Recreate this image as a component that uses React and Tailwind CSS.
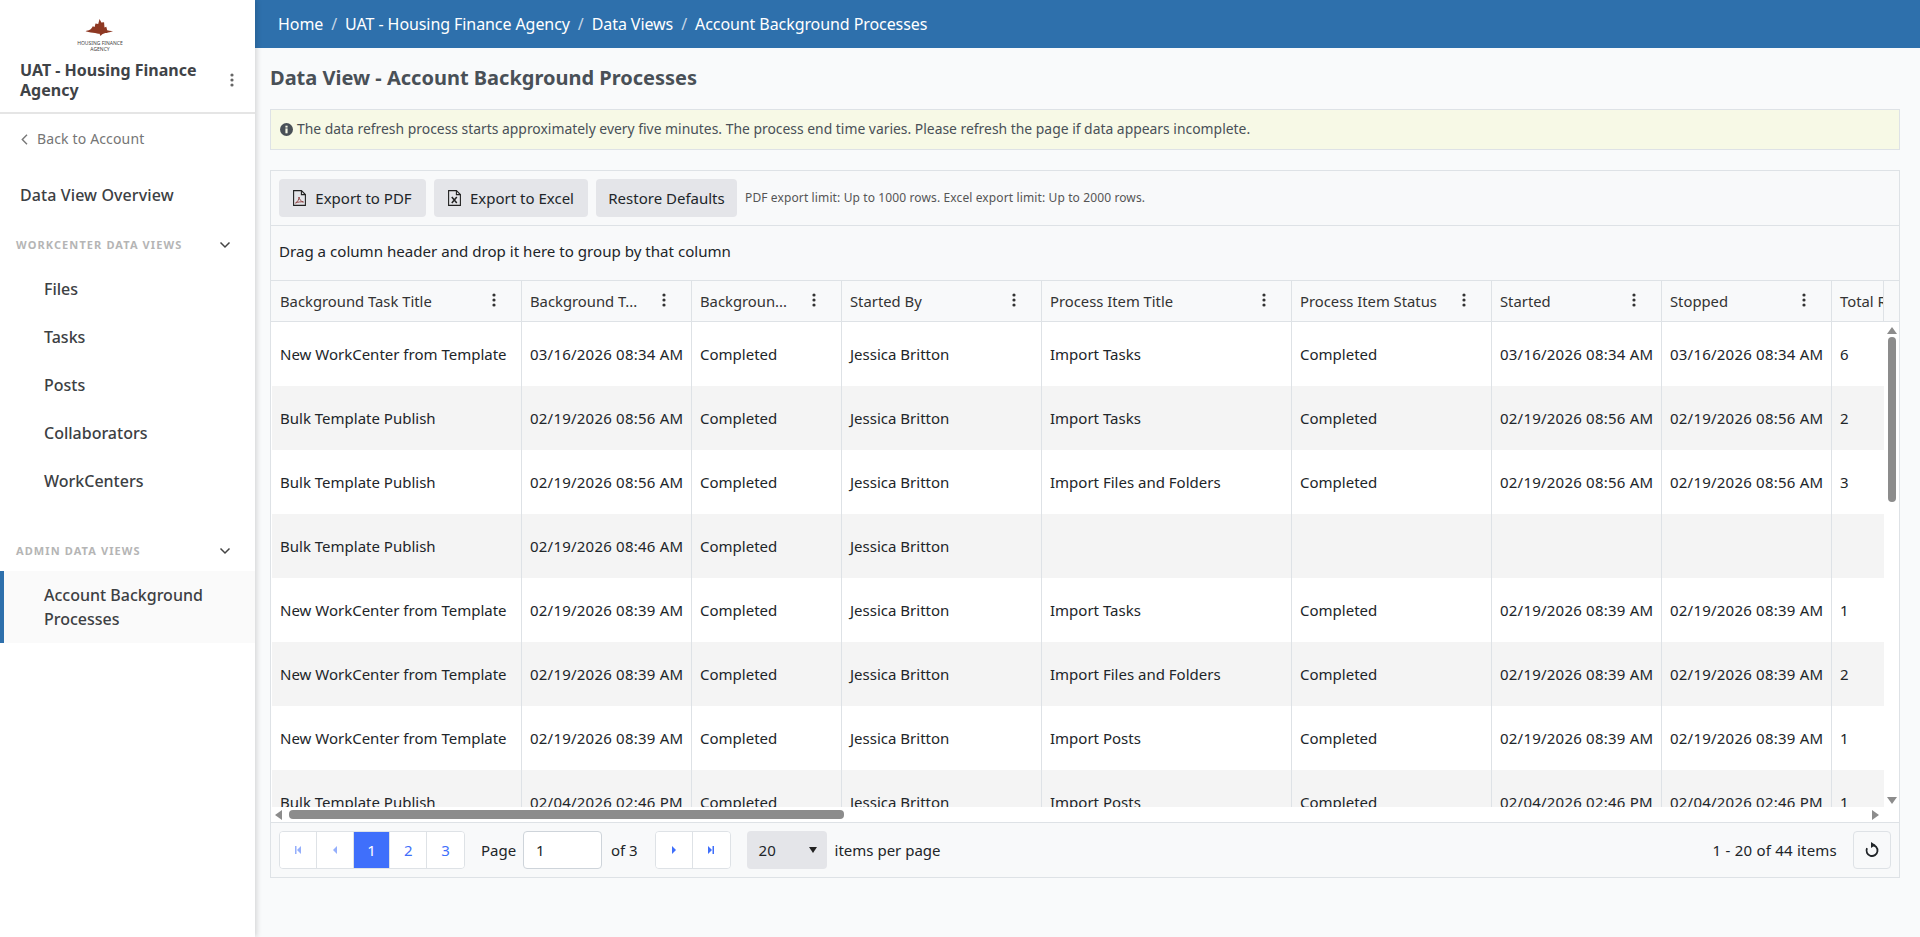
import React from "react";

const columns = [
  { title: "Background Task Title", w: "w-[249px]" },
  { title: "Background T...", w: "w-[170px]" },
  { title: "Backgroun...", w: "w-[150px]" },
  { title: "Started By", w: "w-[200px]" },
  { title: "Process Item Title", w: "w-[250px]" },
  { title: "Process Item Status", w: "w-[200px]" },
  { title: "Started", w: "w-[170px]" },
  { title: "Stopped", w: "w-[170px]" },
  { title: "Total Records", w: "w-[120px]", noMenu: true },
];

const rows = [
  ["New WorkCenter from Template", "03/16/2026 08:34 AM", "Import Tasks", "6"],
  ["Bulk Template Publish", "02/19/2026 08:56 AM", "Import Tasks", "2"],
  ["Bulk Template Publish", "02/19/2026 08:56 AM", "Import Files and Folders", "3"],
  ["Bulk Template Publish", "02/19/2026 08:46 AM", "", ""],
  ["New WorkCenter from Template", "02/19/2026 08:39 AM", "Import Tasks", "1"],
  ["New WorkCenter from Template", "02/19/2026 08:39 AM", "Import Files and Folders", "2"],
  ["New WorkCenter from Template", "02/19/2026 08:39 AM", "Import Posts", "1"],
  ["Bulk Template Publish", "02/04/2026 02:46 PM", "Import Posts", "1"],
];

const dateCols = [1, 6, 7];

const Dots = ({ className = "" }) => (
  <svg width="4" height="14" viewBox="0 0 4 14" className={className} fill="currentColor">
    <circle cx="2" cy="2" r="1.6" />
    <circle cx="2" cy="7" r="1.6" />
    <circle cx="2" cy="12" r="1.6" />
  </svg>
);

const Chevron = () => (
  <svg width="12" height="8" viewBox="0 0 12 8" fill="none" stroke="#444" strokeWidth="1.5">
    <path d="M1.5 1.5 6 6l4.5-4.5" />
  </svg>
);

const Logo = () => (
  <div className="flex flex-col items-center h-[34px] w-[60px]">
    <svg width="32" height="18" viewBox="0 0 32 20" fill="#8e3823">
      <path d="M1 13c4-.5 6-2.500 7-5l2 1 1-4 3 .5L15.500 0l2 4 3-.5.5 6 2-1 1 4c2 .8 4 1 6.500 .8-3 1-5 1.700-7 2.200-2-.3-3 .4-5 1.500l-2 2-1-2.500c-2-.5-3.500-.5-5-1-3-.2-6-1-10.500-2z" />
    </svg>
    <div className="text-[5px] leading-[6px] text-center text-[#444] mt-[3px] whitespace-nowrap">
      HOUSING FINANCE
      <br />
      AGENCY
    </div>
  </div>
);

const SectionHead = ({ label }) => (
  <div className="flex items-center justify-between pl-4 pr-6 h-5">
    <span className="text-[11px] font-bold tracking-[1.1px] text-[#b5b5b5]">{label}</span>
    <Chevron />
  </div>
);

const NavItem = ({ label }) => (
  <div className="h-12 flex items-center pl-11 text-base font-medium text-[#3c4043]">{label}</div>
);

const Sidebar = () => (
  <aside className="w-[255px] h-full shrink-0 bg-white flex flex-col shadow-[2px_0_5px_rgba(0,0,0,0.14)] z-10">
    <div className="h-[114px] shrink-0 border-b-2 border-[#e5e5e5] flex flex-col pt-[19px]">
      <div className="flex pl-[70px]">
        <Logo />
      </div>
      <div className="flex items-center justify-between pl-5 pr-[20px] mt-[7px]">
        <div className="text-base leading-5 font-bold text-[#3f4347] w-[205px]">UAT - Housing Finance Agency</div>
        <Dots className="text-[#666] mr-[1px]" />
      </div>
    </div>
    <div className="flex items-center gap-[9px] pl-[21px] mt-[15px] text-sm tracking-[0.15px] text-[#757575] h-5">
      <svg width="7" height="11" viewBox="0 0 7 11" fill="none" stroke="#777" strokeWidth="1.4">
        <path d="M6 .8 1.300 5.500 6 10.200" />
      </svg>
      Back to Account
    </div>
    <div className="pl-5 mt-[32px] h-7 flex items-center text-base tracking-[0.1px] font-medium text-[#3c4043]">Data View Overview</div>
    <div className="mt-[26px]">
      <SectionHead label="WORKCENTER DATA VIEWS" />
    </div>
    <div className="mt-[10px]">
      <NavItem label="Files" />
      <NavItem label="Tasks" />
      <NavItem label="Posts" />
      <NavItem label="Collaborators" />
      <NavItem label="WorkCenters" />
    </div>
    <div className="mt-[36px]">
      <SectionHead label="ADMIN DATA VIEWS" />
    </div>
    <div className="mt-[10px] h-[72px] border-l-4 border-[#2e70ac] bg-[#fafafa] pl-10 flex items-center text-base leading-6 font-medium text-[#3c4043]">
      <div>
        Account Background
        <br />
        Processes
      </div>
    </div>
  </aside>
);

const PagerBtn = ({ children, active, last }) => (
  <div
    className={`w-[36.8px] h-[36px] flex items-center justify-center text-[15px] ${
      active ? "bg-[#3f6ffb] text-white" : "bg-white text-[#3f6ffb]"
    } ${last ? "" : "border-r border-[#dee2e6]"}`}
  >
    {children}
  </div>
);

const Tri = ({ dir, bar, faded }) => (
  <svg width="10" height="12" viewBox="0 0 10 12" fill="#3f6ffb" opacity={faded ? 0.55 : 1}>
    {dir === "left" ? (
      <>
        <path d={bar ? "M8 2v8L4 6z" : "M7 2v8L3 6z"} />
        {bar && <rect x="2" y="2" width="1.500" height="8" />}
      </>
    ) : (
      <>
        <path d={bar ? "M2 2v8l4-4z" : "M3 2v8l4-4z"} />
        {bar && <rect x="6.500" y="2" width="1.500" height="8" />}
      </>
    )}
  </svg>
);

const Footer = () => (
  <div className="h-[55px] flex items-center pl-[8px] pr-[8px] bg-[#f8f9fa] border-t border-[#dee2e6] text-[15px] text-[#212529]">
    <div className="flex rounded border border-[#dee2e6] overflow-hidden">
      <PagerBtn>
        <Tri dir="left" bar faded />
      </PagerBtn>
      <PagerBtn>
        <Tri dir="left" faded />
      </PagerBtn>
      <PagerBtn active>1</PagerBtn>
      <PagerBtn>2</PagerBtn>
      <PagerBtn last>3</PagerBtn>
    </div>
    <span className="ml-[16px] w-[42px]">Page</span>
    <div className="w-[79px] h-[38px] rounded border border-[#ced4da] bg-white flex items-center pl-3">1</div>
    <span className="ml-[9px] w-[44px]">of 3</span>
    <div className="flex rounded border border-[#dee2e6] overflow-hidden">
      <PagerBtn>
        <Tri dir="right" />
      </PagerBtn>
      <PagerBtn last>
        <Tri dir="right" bar />
      </PagerBtn>
    </div>
    <div className="ml-[16px] w-[80px] h-[38px] rounded bg-[#e4e5e9] flex items-center justify-between pl-3 pr-[10px]">
      <span>20</span>
      <svg width="8" height="6" viewBox="0 0 8 6" fill="#222">
        <path d="M0 0h8L4 6z" />
      </svg>
    </div>
    <span className="ml-[8px]">items per page</span>
    <span className="ml-auto tracking-[0.22px]">1 - 20 of 44 items</span>
    <div className="ml-[16px] w-[38px] h-[38px] rounded border border-[#dee2e6] flex items-center justify-center">
      <svg width="16" height="16" viewBox="0 0 16 16" fill="none">
        <path d="M8 3a5.500 5.500 0 1 1-5 3.200" stroke="#212529" strokeWidth="1.800" />
        <path d="M7 0v6l4.500-3z" fill="#212529" />
      </svg>
    </div>
  </div>
);

const PdfIcon = () => (
  <svg width="13" height="16" viewBox="0 0 13 16" fill="none" stroke="#222" strokeWidth="1.100">
    <path d="M.6.6h7.800l4 4v10.800H.6z" />
    <path d="M8.400.6v4h4" />
    <path d="M2.500 13c2-1 3.500-3.500 3.500-6 .3 2.500 2 4.500 4.500 5-2.500-.5-5.500 0-8 1z" strokeWidth="0.9" stroke="#8a3a3a" />
  </svg>
);

const ExcelIcon = () => (
  <svg width="13" height="16" viewBox="0 0 13 16" fill="none" stroke="#222" strokeWidth="1.100">
    <path d="M.6.6h7.800l4 4v10.800H.6z" />
    <path d="M8.400.6v4h4" />
    <path d="M3.800 7l5 6M8.800 7l-5 6" strokeWidth="1.500" />
  </svg>
);

const ToolBtn = ({ icon, children, w }) => (
  <div className={`h-[38px] ${w} rounded bg-[#e4e5e9] flex items-center justify-center gap-[9px] text-[15px] text-[#212529]`}>
    {icon}
    {children}
  </div>
);

const Grid = () => (
  <div className="border border-[#dee2e6] bg-[#f8f9fa] h-[708px] flex flex-col">
    <div className="h-[55px] shrink-0 flex items-center pl-[8px] gap-[8px] border-b border-[#dee2e6]">
      <ToolBtn icon={<PdfIcon />} w="w-[147px]">Export to PDF</ToolBtn>
      <ToolBtn icon={<ExcelIcon />} w="w-[154px]">Export to Excel</ToolBtn>
      <ToolBtn w="w-[141px]">Restore Defaults</ToolBtn>
      <span className="text-xs tracking-[0.12px] text-[#555]">PDF export limit: Up to 1000 rows. Excel export limit: Up to 2000 rows.</span>
    </div>
    <div className="h-[54px] shrink-0 flex items-center pl-[8px] pb-[3px] text-[15.1px] text-[#212529]">
      Drag a column header and drop it here to group by that column
    </div>
    <div className="flex border-y border-[#dee2e6] h-[42px] shrink-0 pl-[1px]">
      <div className="w-[1612px] overflow-hidden border-r border-[#dee2e6]">
        <div className="flex h-full w-max">
          {columns.map((c, i) => (
            <div
              key={i}
              className={`${c.w} shrink-0 h-full flex items-center justify-between pl-2 pr-[25px] text-[14.8px] text-[#333] ${
                i === 0 ? "" : "border-l border-[#dee2e6]"
              }`}
            >
              <span className="whitespace-nowrap">{c.title}</span>
              {!c.noMenu && <Dots className="text-[#333] -mt-[3px] shrink-0" />}
            </div>
          ))}
        </div>
      </div>
    </div>
    <div className="flex h-[485px] shrink-0 bg-white pl-[1px]">
      <div className="w-[1612px] overflow-hidden">
        <div className="w-max">
          {rows.map((r, i) => {
            const cells = [r[0], r[1], "Completed", "Jessica Britton", r[2], r[2] ? "Completed" : "", r[2] ? r[1] : "", r[2] ? r[1] : "", r[3]];
            return (
              <div key={i} className={`flex h-16 ${i % 2 ? "bg-[#f4f4f4]" : "bg-white"}`}>
                {cells.map((t, j) => (
                  <div
                    key={j}
                    className={`${columns[j].w} shrink-0 flex items-center pl-2 text-[15px] text-[#212529] whitespace-nowrap ${
                      j === 0 ? "" : "border-l border-[#dee2e6]"
                    } ${dateCols.includes(j) ? "tracking-[0.22px]" : ""}`}
                  >
                    {t}
                  </div>
                ))}
              </div>
            );
          })}
        </div>
      </div>
      <div className="w-[15px] flex flex-col items-center bg-white pt-[5px] pb-[3px]">
        <svg width="10" height="7" viewBox="0 0 10 7" fill="#8c8c8c">
          <path d="M5 0l5 7H0z" />
        </svg>
        <div className="mt-[3px] w-[8px] h-[165px] rounded bg-[#8c8c8c]" />
        <svg width="10" height="7" viewBox="0 0 10 7" fill="#8c8c8c" className="mt-auto">
          <path d="M0 0h10L5 7z" />
        </svg>
      </div>
    </div>
    <div className="h-[15px] shrink-0 bg-white flex items-center pl-[4px] pr-[20px]">
      <svg width="7" height="10" viewBox="0 0 7 10" fill="#8c8c8c">
        <path d="M7 0v10L0 5z" />
      </svg>
      <div className="ml-[7px] w-[555px] h-[9px] rounded bg-[#8c8c8c]" />
      <svg width="7" height="10" viewBox="0 0 7 10" fill="#8c8c8c" className="ml-auto">
        <path d="M0 0v10l7-5z" />
      </svg>
    </div>
    <Footer />
  </div>
);

export default function App() {
  return (
    <div className="flex h-screen overflow-hidden bg-[#f9fafb] font-['Noto_Sans',sans-serif]">
      <Sidebar />
      <main className="flex-1 min-w-0 flex flex-col">
        <div className="h-12 shrink-0 bg-[#2e70ac] flex items-center pl-[23px] gap-[8px] text-base tracking-[-0.08px] text-white">
          <span>Home</span>
          <span className="text-[#c5d6e6]">/</span>
          <span>UAT - Housing Finance Agency</span>
          <span className="text-[#c5d6e6]">/</span>
          <span>Data Views</span>
          <span className="text-[#c5d6e6]">/</span>
          <span>Account Background Processes</span>
        </div>
        <div className="pl-[15px] pr-[20px] flex flex-col">
          <h1 className="mt-[15px] h-[30px] flex items-center text-xl font-bold text-[#495057]">Data View - Account Background Processes</h1>
          <div className="mt-[16px] h-[41px] border border-[#dee2e6] bg-[#f7f9e6] flex items-center pl-[9px] gap-[4px] text-[13.9px] text-[#495057]">
            <svg width="13" height="13" viewBox="0 0 12 12">
              <circle cx="6" cy="6" r="6" fill="#495057" />
              <rect x="5" y="5" width="2" height="4.500" fill="#f7f9e6" />
              <rect x="5" y="2.500" width="2" height="1.700" fill="#f7f9e6" />
            </svg>
            The data refresh process starts approximately every five minutes. The process end time varies. Please refresh the page if data appears incomplete.
          </div>
          <div className="mt-[20px]">
            <Grid />
          </div>
        </div>
      </main>
    </div>
  );
}
